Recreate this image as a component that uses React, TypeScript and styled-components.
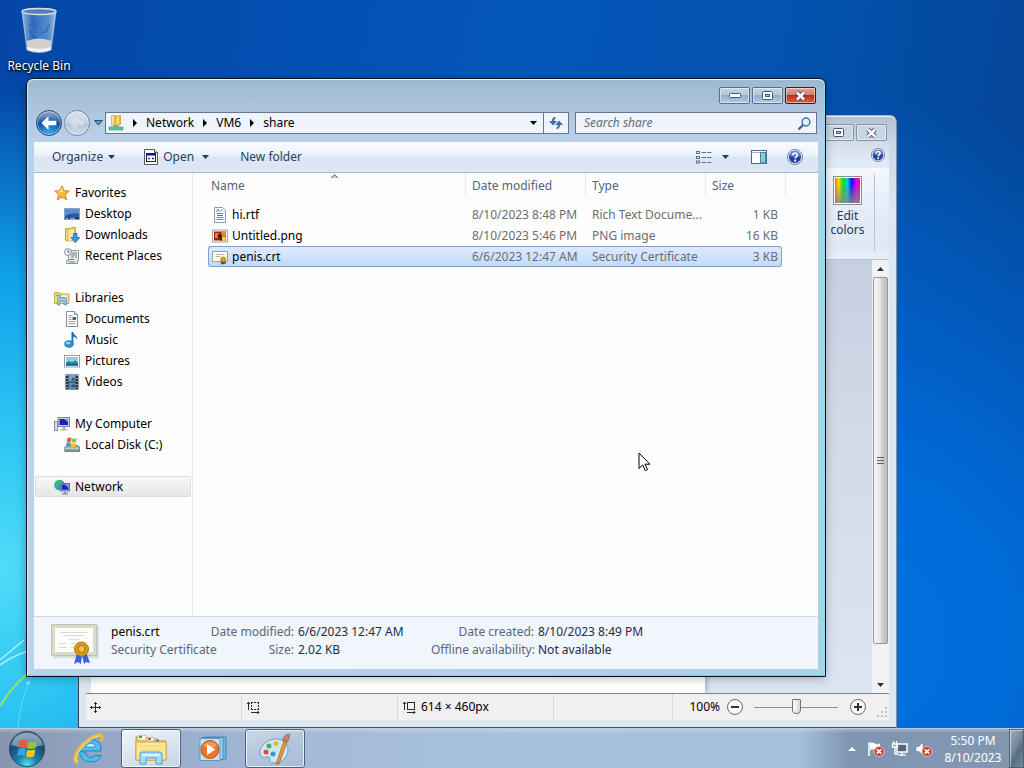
import React from "react";
import styled, { createGlobalStyle, css } from "styled-components";

const GlobalStyle = createGlobalStyle`
  * { box-sizing: border-box; }
  body {
    margin: 0;
    font-family: "Noto Sans", "Open Sans", sans-serif;
    font-size: 12px;
    line-height: 18px;
    color: #000;
    cursor: default;
  }
  button, input { font: inherit; color: inherit; }
  button { padding: 0; border: 0; background: none; }
  a { color: inherit; text-decoration: none; }
  svg { display: block; flex: none; }
`;

/* ---------- desktop ---------- */

const Screen = styled.div`
  display: flex;
  flex-direction: column;
  min-height: 100vh;
`;

const Desktop = styled.main`
  position: relative;
  flex: 1;
  min-height: 640px;
  overflow: hidden;
  background:
    radial-gradient(ellipse 38% 66% at 0% 78%, #4fdcf8 0%, #2cc4f2 30%, #0f9ee8 62%, rgba(10, 125, 220, 0) 100%),
    radial-gradient(ellipse 55% 75% at 82% 88%, #0074e0 0%, #0069d6 35%, rgba(0, 96, 200, 0) 100%),
    linear-gradient(100deg, #0446a8 0%, #0356b8 45%, #0353b0 68%, #044190 100%);
`;

const Waves = styled.svg`
  position: absolute;
  left: 0;
  bottom: 0;
`;

const DesktopIcon = styled.button`
  display: flex;
  flex-direction: column;
  align-items: center;
  gap: 4px;
  width: 78px;
  padding-top: 7px;
  color: #fff;
  text-shadow: 0 1px 2px #000, 1px 1px 3px #000;
`;

const Pointer = styled.svg`
  position: absolute;
  left: 638px;
  top: 452px;
`;

/* ---------- window frame ---------- */

const Frame = styled.section<{ $active?: boolean }>`
  position: absolute;
  display: flex;
  flex-direction: column;
  padding: 8px 7px 7px;
  border: 1px solid ${(p) => (p.$active ? "#06121f" : "#4d6472")};
  border-radius: 7px 7px 0 0;
  ${(p) =>
    p.$active
      ? css`
          left: 26px;
          right: 198px;
          top: 78px;
          bottom: 51px;
          background:
            linear-gradient(180deg, #9db8cc 0, #adc5dc 30px, #bbd1ea 62px, rgba(187, 209, 234, 0) 120px),
            linear-gradient(90deg, #bcd2ea 0, #b4d0e8 60%, #a6d3e6 100%);
          box-shadow: inset 0 1px 0 #eef6fc, inset 1px 0 0 #d8ecf8, inset -1px 0 0 #8fdcf2, inset 0 -1px 0 #62d8f4,
            0 2px 10px rgba(0, 0, 0, 0.25);
        `
      : css`
          left: 78px;
          right: 127px;
          top: 115px;
          bottom: 0;
          border-color: #9fb2c6 #7d93ab #43565f #2e4552;
          background: linear-gradient(180deg, #b3c2d3 0, #c9d6e5 26px, #dde7f1 90px, #dde6ee 100%);
          box-shadow: inset 0 1px 0 #eef3f8;
        `}
`;

const Caption = styled.div`
  display: flex;
  justify-content: flex-end;
  gap: 2px;
  padding-right: 2px;
`;

const CaptionButton = styled.button<{ $kind?: "close" | "idle" }>`
  display: grid;
  place-items: center;
  width: 31px;
  height: 17px;
  border: 1px solid #56708c;
  border-radius: 2px;
  box-shadow: inset 0 0 0 1px rgba(255, 255, 255, 0.5);
  background: linear-gradient(180deg, #c3d4e4 0, #b2c7db 48%, #94aec8 50%, #b4cbe2 100%);
  ${(p) =>
    p.$kind === "close" &&
    css`
      border-color: #4c1418;
      background: linear-gradient(180deg, #e3a497 0, #d47867 48%, #bb2f1c 50%, #d4654c 100%);
    `}
  ${(p) =>
    p.$kind === "idle" &&
    css`
      border-color: #8293a9;
      background: #c8d5e3;
    `}
`;

/* ---------- explorer: navigation ---------- */

const NavRow = styled.div`
  display: flex;
  align-items: center;
  height: 26px;
  margin: 6px 1px 6px 2px;
`;

const RoundButton = styled.button<{ $primary?: boolean }>`
  display: grid;
  place-items: center;
  width: 26px;
  height: 26px;
  margin-right: 2px;
  border: 1px solid ${(p) => (p.$primary ? "#25456f" : "#75899f")};
  border-radius: 50%;
  background: ${(p) =>
    p.$primary
      ? "radial-gradient(circle at 50% 100%, #35b8ee 0, #1867b4 45%, rgba(20, 60, 130, 0) 70%), linear-gradient(180deg, #93aed2 0, #3c63a4 45%, #0d2f78 50%, #15458f 100%)"
      : "linear-gradient(180deg, #d9e3ee 0, #c6d5e5 48%, #b4c5d9 52%, #cddbe9 100%)"};
  box-shadow: inset 0 0 0 1px rgba(255, 255, 255, 0.5);
`;

const HistoryButton = styled.button`
  display: grid;
  place-items: center;
  width: 13px;
  height: 22px;
`;

const AddressBar = styled.div`
  display: flex;
  flex: 1;
  align-items: stretch;
  height: 22px;
  border: 1px solid #63788f;
  background: #eef3fc;
`;

const Crumbs = styled.nav`
  display: flex;
  flex: 1;
  align-items: center;
  gap: 9px;
  padding-left: 2px;
`;

const CrumbStep = styled.span`
  display: flex;
  align-items: center;
  gap: 9px;
`;

const BarButton = styled.button<{ $divided?: boolean }>`
  display: grid;
  place-items: center;
  width: ${(p) => (p.$divided ? "25px" : "20px")};
  border-left: ${(p) => (p.$divided ? "1px solid #63788f" : "0")};
`;

const SearchBox = styled.label`
  display: flex;
  align-items: center;
  width: 242px;
  height: 22px;
  margin-left: 6px;
  padding: 0 5px 0 8px;
  border: 1px solid #63788f;
  background: #eef3fc;
`;

const SearchInput = styled.input`
  flex: 1;
  min-width: 0;
  padding: 0;
  border: 0;
  outline: 0;
  background: none;
  &::placeholder {
    color: #666c75;
    font-style: italic;
    opacity: 1;
  }
`;

/* ---------- explorer: client area ---------- */

const Client = styled.div`
  display: flex;
  flex: 1;
  flex-direction: column;
  min-height: 0;
  background: #fdfdfe;
`;

const Toolbar = styled.div`
  display: flex;
  align-items: center;
  height: 31px;
  padding: 0 15px 0 18px;
  border-bottom: 1px solid #a4b4c9;
  background: linear-gradient(180deg, #fafcff 0, #eaf2fb 45%, #dce5f3 52%, #dde6f4 100%);
  color: #2b3f5a;
`;

const ToolButton = styled.button<{ $gap?: number }>`
  display: flex;
  align-items: center;
  gap: 5px;
  margin-right: ${(p) => p.$gap ?? 0}px;
`;

const Spacer = styled.span`
  flex: 1;
`;

const Body = styled.div`
  display: flex;
  flex: 1;
  min-height: 0;
`;

const Sidebar = styled.nav`
  width: 159px;
  padding: 9px 1px 0;
  border-right: 1px solid #e6ebf4;
`;

const NavGroup = styled.ul`
  margin: 0 0 21px;
  padding: 0;
  list-style: none;
`;

const NavLink = styled.a<{ $child?: boolean; $current?: boolean }>`
  display: flex;
  align-items: center;
  gap: 5px;
  height: 21px;
  padding-left: ${(p) => (p.$child ? 28 : 18)}px;
  border: 1px solid ${(p) => (p.$current ? "#dedede" : "transparent")};
  border-radius: 2px;
  background: ${(p) => (p.$current ? "linear-gradient(180deg, #f8f8f8, #e6e6e6)" : "none")};
`;

const Files = styled.div`
  flex: 1;
  min-width: 0;
  padding-left: 15px;
`;

const FileTable = styled.table`
  width: 578px;
  table-layout: fixed;
  border-collapse: separate;
  border-spacing: 0;
  tbody::before {
    content: "";
    display: block;
    height: 7px;
  }
`;

const HeadCell = styled.th`
  position: relative;
  height: 24px;
  padding: 2px 0 0 6px;
  border-right: 1px solid #e4e9f1;
  color: #55657a;
  font-weight: 400;
  text-align: left;
  &:first-child {
    padding-left: 3px;
  }
`;

const SortMark = styled.svg`
  position: absolute;
  top: 1px;
  left: 48%;
`;

const Row = styled.tr<{ $selected?: boolean }>`
  td {
    height: 21px;
    padding: 0 0 0 6px;
    overflow: hidden;
    border: 0 solid #7da2ce;
    color: #6d6d6d;
    text-overflow: ellipsis;
    white-space: nowrap;
  }
  td:first-child {
    padding-left: 4px;
    color: #000;
  }
  td:last-child {
    padding-right: 4px;
    text-align: right;
  }
  ${(p) =>
    p.$selected &&
    css`
      td {
        border-width: 1px 0;
        background: linear-gradient(180deg, #dcebfc, #c1dbfc);
      }
      td:first-child {
        padding-left: 3px;
        border-left-width: 1px;
        border-radius: 3px 0 0 3px;
      }
      td:last-child {
        padding-right: 3px;
        border-right-width: 1px;
        border-radius: 0 3px 3px 0;
      }
    `}
`;

const FileName = styled.span`
  display: flex;
  align-items: center;
  gap: 4px;
`;

const Details = styled.footer`
  display: flex;
  height: 53px;
  padding: 6px 0 0 17px;
  border-top: 1px solid #cdd9e8;
  background: #f1f5fc;
`;

const DetailName = styled.div`
  width: 99px;
  margin-left: 12px;
  color: #5a6779;
  white-space: nowrap;
`;

const DetailTitle = styled.div`
  color: #000;
`;

const DetailList = styled.dl<{ $labels: number; $values: number }>`
  display: grid;
  grid-template-columns: ${(p) => p.$labels}px ${(p) => p.$values}px;
  grid-auto-rows: 18px;
  column-gap: 4px;
  margin: 0;
  white-space: nowrap;
  dt {
    color: #5a6779;
    text-align: right;
  }
  dd {
    margin: 0;
    color: #1e2d45;
  }
`;

/* ---------- paint window ---------- */

const TabRow = styled.div`
  display: flex;
  align-items: center;
  justify-content: flex-end;
  height: 27px;
  padding-right: 4px;
  background: linear-gradient(180deg, rgba(226, 235, 247, 0.3), #e3ebf7);
`;

const Ribbon = styled.div`
  display: flex;
  justify-content: flex-end;
  height: 92px;
  padding: 5px 14px 8px 0;
  border-top: 1px solid #f6f9fd;
  border-bottom: 1px solid #b3c3d8;
  background: linear-gradient(180deg, #f4f8fd 0, #e3ebf7 50%, #dfe9f6 85%, #e6f1fb 100%);
`;

const RibbonButton = styled.button`
  display: flex;
  flex-direction: column;
  align-items: center;
  width: 54px;
  padding-top: 2px;
  border-right: 1px solid #b5c4d8;
  color: #1e395b;
  line-height: 14px;
`;

const RibbonLabel = styled.span`
  width: 40px;
  margin-top: 4px;
`;

const Workspace = styled.div`
  display: flex;
  flex: 1;
  min-height: 0;
  padding-left: 5px;
  background: linear-gradient(180deg, #c5cfe1 0, #d0d9e7 35%, #dce6f2 100%);
`;

const Paper = styled.div`
  width: 614px;
  background: #fff;
  box-shadow: 3px 0 4px #b4c0d2;
`;

const ScrollBar = styled.div`
  display: flex;
  flex-direction: column;
  width: 17px;
  margin-left: auto;
  padding: 0 1px;
  background: #f1f2f4;
`;

const ScrollArrow = styled.button`
  display: grid;
  place-items: center;
  height: 17px;
`;

const ScrollThumb = styled.div`
  display: grid;
  place-items: center;
  flex: 367;
  border: 1px solid #959799;
  border-radius: 2px;
  background: linear-gradient(90deg, #f7f7f7 0, #e9e9ea 45%, #cfd0d3 60%, #bcbdc0 100%);
`;

const ScrollRest = styled.div`
  flex: 32;
`;

const StatusBar = styled.footer`
  display: flex;
  height: 27px;
  border-top: 1px solid #7d828c;
  background: #f1eff0;
`;

const StatusCell = styled.div<{ $wide?: boolean }>`
  display: flex;
  align-items: center;
  gap: 4px;
  width: ${(p) => (p.$wide ? 156 : 119)}px;
  padding-left: 4px;
  border-right: 1px solid #d9d9dc;
`;

const ZoomArea = styled.div`
  display: flex;
  flex: 1;
  align-items: center;
  justify-content: flex-end;
  gap: 7px;
`;

const ZoomButton = styled.button`
  display: grid;
  place-items: center;
  width: 16px;
  height: 16px;
  border: 1px solid #6a6a6a;
  border-radius: 50%;
  background: #fafafa;
`;

const ZoomSlider = styled.input`
  width: 84px;
  height: 16px;
  margin: 0 5px 0 4px;
  appearance: none;
  background: none;
  &::-webkit-slider-runnable-track {
    height: 1px;
    background: #8f9194;
  }
  &::-webkit-slider-thumb {
    appearance: none;
    width: 9px;
    height: 15px;
    margin-top: -8px;
    border: 1px solid #6f7174;
    border-radius: 1px 1px 4px 4px;
    background: linear-gradient(90deg, #fff, #d4d6d9);
  }
`;

/* ---------- taskbar ---------- */

const Taskbar = styled.footer`
  display: flex;
  height: 40px;
  border-top: 1px solid #bccbd8;
  background:
    linear-gradient(180deg, rgba(255, 255, 255, 0.28) 0, rgba(255, 255, 255, 0) 4px),
    linear-gradient(90deg, #8795b0 0, #94a6c4 10%, #a3b9d8 28%, #a8c2de 50%, #a5bfdd 78%, #7f96b3 83%, #8197b0 100%);
`;

const StartButton = styled.button`
  display: grid;
  place-items: center;
  width: 54px;
  margin-right: 5px;
`;

const TaskButton = styled.button<{ $state?: "open" | "active" }>`
  display: grid;
  place-items: center;
  width: 60px;
  margin-right: 2px;
  border: 1px solid transparent;
  border-radius: 3px;
  ${(p) =>
    p.$state &&
    css`
      border-color: #4d6279;
      box-shadow: inset 0 0 0 1px rgba(255, 255, 255, 0.7);
      background: ${p.$state === "active"
        ? "linear-gradient(160deg, #f1f5f9 0, #dbe5ef 50%, #c5d5e6 100%)"
        : "linear-gradient(160deg, #cdd9e8 0, #b3c5dc 50%, #a5bcd8 100%)"};
    `}
`;

const Tray = styled.div`
  display: flex;
  align-items: center;
  gap: 6px;
  margin-left: auto;
`;

const TrayButton = styled.button`
  display: grid;
  place-items: center;
  width: 18px;
  height: 24px;
`;

const Clock = styled.time`
  width: 64px;
  padding-left: 4px;
  color: #fff;
  line-height: 17px;
  text-align: center;
`;

const PeekButton = styled.button`
  align-self: stretch;
  width: 15px;
  border: 1px solid #4f6273;
  box-shadow: inset 1px 1px 0 rgba(255, 255, 255, 0.5);
  background: linear-gradient(120deg, #9aaab9 0, #75899d 45%, #566d82 60%, #74899e 100%);
`;

/* ---------- small drawings ---------- */

const Caret = ({ color = "#1e395b" }: { color?: string }) => (
  <svg width="7" height="4" viewBox="0 0 7 4"><path d="M0 0h7L3.500 4z" fill={color} /></svg>
);

const RightArrow = () => (
  <svg width="4" height="8" viewBox="0 0 4 8"><path d="M0 0l4 4-4 4z" /></svg>
);

const MinGlyph = () => (
  <svg width="12" height="5" viewBox="0 0 12 5"><rect x=".5" y=".5" width="11" height="4" rx="1" fill="#fff" stroke="#47586c" /></svg>
);

const MaxGlyph = () => (
  <svg width="11" height="9" viewBox="0 0 11 9">
    <rect x=".5" y=".5" width="10" height="8" rx="1" fill="#fff" stroke="#47586c" />
    <rect x="3.500" y="3.500" width="4" height="2" fill="#b5c8da" stroke="#47586c" />
  </svg>
);

const CloseGlyph = () => (
  <svg width="13" height="10" viewBox="0 0 13 10">
    <path d="M3 1.500l7 7M10 1.500l-7 7" stroke="#47465c" strokeWidth="4.500" />
    <path d="M3 1.500l7 7M10 1.500l-7 7" stroke="#fff" strokeWidth="2.600" />
  </svg>
);

const HelpIcon = ({ size }: { size: number }) => (
  <svg width={size} height={size} viewBox="0 0 16 16">
    <circle cx="8" cy="8" r="7.500" fill="#dfe7f2" stroke="#7482a0" />
    <circle cx="8" cy="8" r="6" fill="#2440a4" />
    <path d="M2.400 7A5.700 5.700 0 0 1 13.600 7Q8 9 2.400 7z" fill="#7c96dc" opacity=".7" />
    <path d="M5.700 6.300c.1-3 4.700-2.900 4.700-.2 0 1.700-2.200 1.700-2.200 3.500" fill="none" stroke="#fff" strokeWidth="1.700" />
    <circle cx="8.200" cy="11.700" r="1.100" fill="#fff" />
  </svg>
);

const Flag = ({ x, y, s }: { x: number; y: number; s: number }) => (
  <g transform={`translate(${x} ${y}) scale(${s})`}>
    <path d="M2 1.500Q5 0 8 1.500L7 7Q4 5.500 1 7z" fill="#ef5a24" />
    <path d="M9 1.800Q12 3.300 15.500 1.800L14.500 7.200Q11 8.700 8 7.300z" fill="#8cc63c" />
    <path d="M.8 8Q4 6.500 6.800 8L5.800 13.500Q3 12-.2 13.500z" fill="#3aa0e8" />
    <path d="M7.800 8.300Q11 9.700 14.300 8.200L13.300 13.800Q10 15.300 6.800 13.800z" fill="#fdc51c" />
  </g>
);

const icons: Record<string, React.ReactNode> = {
  star: (
    <>
      <path d="M8 .8l2.100 4.800 5.200.5-3.900 3.500 1.200 5.200L8 12.100l-4.600 2.700 1.200-5.200L.7 6.100l5.200-.5z" fill="#fbb83a" stroke="#d9822b" />
      <path d="M8 2.800l1.300 3.600L5 7.500 2.800 6.700l3.700-.4z" fill="#ffe9a0" />
    </>
  ),
  desktop: (
    <>
      <rect x=".5" y="2.500" width="15" height="11" fill="#2958a8" stroke="#8fa2bc" />
      <path d="M1 3h14v5Q8 6 1 10z" fill="#5b8bd2" />
      <path d="M1 11.500h14V13H1z" fill="#1d2b45" />
      <path d="M2 12.300h2m2 0h5" stroke="#a9c7e8" />
    </>
  ),
  downloads: (
    <>
      <path d="M1.500 1.500h5l1-1h4v13h-10z" fill="#f0d67c" stroke="#c7a545" />
      <path d="M4 2v12.500l6.500-1.200V2z" fill="#fbe9a0" stroke="#d0b050" strokeWidth=".7" />
      <path d="M9.500 6.500h3.500v4h2.700L11.300 15.700 7 10.500h2.500z" fill="#3a9be0" stroke="#1c66a6" strokeWidth=".8" />
    </>
  ),
  recent: (
    <>
      <path d="M4.500 2.500h10v10h-1v3h-11v-3h2z" fill="#e6eaec" stroke="#8e999f" />
      <path d="M8 5h5M7 7h6M7 9h3m1 0h2M5 11.500h5M5 14h6" stroke="#6f7f8a" />
      <circle cx="4" cy="4" r="3.400" fill="#f7f9fa" stroke="#7f8a90" />
      <path d="M4 2v2.200h1.600" fill="none" stroke="#57636b" />
    </>
  ),
  libraries: (
    <>
      <path d="M.5 2.500h5l1 1.500h8.500v9.500H.5z" fill="#f6de84" stroke="#cbab4a" />
      <path d="M2 4.500h5v2H2z" fill="#7cc06a" /><path d="M8 5.500h5v1.500H8z" fill="#fff" />
      <path d="M3.500 15V9.500q0-2 2-2h5q2 0 2 2V15h-2.500v-4h-4v4z" fill="#8fcbec" stroke="#4b94c4" strokeWidth=".8" />
    </>
  ),
  documents: (
    <>
      <path d="M2.500.5h8l3 3v12h-11z" fill="#fff" stroke="#8b8f94" />
      <path d="M10.500.5v3h3" fill="#dfe3e8" stroke="#8b8f94" />
      <path d="M4.500 4.500h4M4.500 6.500h3M4.500 8.500h3M4.500 10.500h7M4.500 12.500h7" stroke="#9aa3ad" />
      <rect x="8.500" y="6" width="3.500" height="3" fill="#4a5f75" />
    </>
  ),
  music: (
    <>
      <path d="M7.500 0h1.700c.3 3 4.600 3.600 3.800 8-.5-2.200-2-3-3.700-3.200V12H7.500z" fill="#1c6cae" />
      <ellipse cx="5" cy="12" rx="4.300" ry="3.300" fill="#2c92d6" stroke="#1a6caa" strokeWidth=".7" />
      <ellipse cx="4.200" cy="11" rx="2.200" ry="1.200" fill="#9cd8f6" />
    </>
  ),
  pictures: (
    <>
      <rect x=".5" y="2.500" width="15" height="11.500" fill="#fff" stroke="#8aa1b5" />
      <rect x="2" y="4" width="12" height="8.500" fill="#8fd0ee" />
      <path d="M2 9.500l3-1.500 3 1.500 3-2 3 2v3H2z" fill="#2b7f9a" />
      <path d="M2 11h12v1.500H2z" fill="#1b5b7a" />
    </>
  ),
  videos: (
    <>
      <rect x="1.500" y=".5" width="13" height="15" fill="#23303f" />
      <path d="M3 1v14.500M13 1v14.500" stroke="#e8eef4" strokeWidth="1.200" strokeDasharray="1 2" />
      <rect x="4.500" y="1" width="7" height="6.500" fill="#6aa9e4" /><rect x="4.500" y="8.500" width="7" height="6.500" fill="#4f8fd4" />
      <path d="M7 6l2-3 2 1.500-1.500 2.500zM7 13l2-3 2 1.500-1.500 2z" fill="#713f37" />
    </>
  ),
  computer: (
    <>
      <rect x=".5" y="5.500" width="3" height="9" fill="#dcdfe6" stroke="#848a9a" />
      <rect x="4" y="1.500" width="11.500" height="9" fill="#c8cddc" stroke="#7e86a0" />
      <rect x="5.500" y="3" width="8.500" height="6" fill="#1c23b4" /><path d="M10 3h4v3z" fill="#8f9cf0" />
      <path d="M8.500 11h3v2h2v1.500h-7V13h2z" fill="#b2b7c6" />
    </>
  ),
  disk: (
    <>
      <path d="M2 10l2-2h8l3.500 2v4.500H.8V10z" fill="#8d9a9f" stroke="#5c696e" strokeWidth=".8" />
      <path d="M1 10.500h14V12H1z" fill="#c0ccd0" /><rect x="11" y="12.500" width="3" height="1" fill="#51d645" />
      <Flag x={2} y={0} s={0.700} />
    </>
  ),
  network: (
    <>
      <circle cx="5.500" cy="6" r="5.300" fill="#2d9bb8" /><path d="M2 3q3-3 6-1L6 5 3 8 1 7zM5 8l3 1-1 2z" fill="#3fbf5b" />
      <rect x="6.500" y="4.500" width="9" height="7.500" fill="#bac3df" stroke="#6b76a0" />
      <rect x="7.500" y="5.500" width="7" height="5.300" fill="#1d25b8" /><path d="M11 5.500h3.500V9z" fill="#8f9df2" />
      <path d="M10 12.500h2V14h2v1.500H8V14h2z" fill="#8d95b5" />
    </>
  ),
  netFolder: (
    <>
      <path d="M3.500.5h4v10h-4z" fill="#f0cf62" stroke="#d2a83e" strokeWidth=".7" />
      <path d="M7 1.500l5.500-1v9L7 11z" fill="#eec14c" stroke="#c8952c" strokeWidth=".7" />
      <path d="M5 1v8M9.500 2v7" stroke="#fdf3b8" />
      <path d="M7 10.500h2.500V12H7z" fill="#7fa79a" />
      <path d="M1 12h4l1-1h4l1 1h4v3H1z" fill="#5cc291" stroke="#4a9d7c" strokeWidth=".6" />
    </>
  ),
  rtf: (
    <>
      <path d="M2.500.5h8l3 3v12h-11z" fill="#fcfdff" stroke="#8f9aa6" />
      <path d="M4.500 5l1.500-3 1.500 3M8.500 3.500h2M4.500 6.500h7M4.500 10.500h7M4.500 12.500h7" fill="none" stroke="#7b8a9b" /><path d="M5 8.500h6" stroke="#3f78b4" />
    </>
  ),
  png: (
    <>
      <rect x=".5" y="2" width="15" height="12" fill="#fff" stroke="#a3a3a3" /><rect x="2" y="3.500" width="12" height="9" fill="#a31d12" />
      <path d="M3 5h4l-1 5H3zM9 4h5v4h-4z" fill="#e58a1e" /><circle cx="7.500" cy="8" r="2" fill="#5a130a" />
      <circle cx="11.800" cy="10.500" r="2.200" fill="#f8cf3e" /><path d="M8 9h2v3.500H8z" fill="#2f2b23" />
    </>
  ),
  crt: (
    <>
      <rect x=".5" y="2.500" width="15" height="10" fill="#fffef8" stroke="#a99f83" />
      <path d="M3.500 5.500h9M3.500 7.500h5" stroke="#b7b5ae" /><path d="M9.500 11.500l-1 4 1.800-.8 1.200 1 1-1.200 1.500.5-1-4z" fill="#4a4a5c" />
      <circle cx="11.200" cy="10.500" r="2.500" fill="#dc9c1e" stroke="#a86c12" strokeWidth=".7" />
    </>
  ),
};

const Icon = ({ name }: { name: string }) => (
  <svg width="16" height="16" viewBox="0 0 16 16">{icons[name]}</svg>
);

const BackArrow = ({ color }: { color: string }) => (
  <svg width="16" height="14" viewBox="0 0 16 14"><path d="M7.500 0L.5 7l7 7V9.300h7.800V4.700H7.500z" fill={color} /></svg>
);

/* ---------- data ---------- */

const crumbs = ["Network", "VM6", "share"];

const navGroups = [
  [["star", "Favorites"], ["desktop", "Desktop"], ["downloads", "Downloads"], ["recent", "Recent Places"]],
  [["libraries", "Libraries"], ["documents", "Documents"], ["music", "Music"], ["pictures", "Pictures"], ["videos", "Videos"]],
  [["computer", "My Computer"], ["disk", "Local Disk (C:)"]],
  [["network", "Network"]],
];

const files = [
  { icon: "rtf", name: "hi.rtf", date: "8/10/2023 8:48 PM", type: "Rich Text Docume...", size: "1 KB" },
  { icon: "png", name: "Untitled.png", date: "8/10/2023 5:46 PM", type: "PNG image", size: "16 KB" },
  { icon: "crt", name: "penis.crt", date: "6/6/2023 12:47 AM", type: "Security Certificate", size: "3 KB" },
];

/* ---------- windows ---------- */

const PaintWindow = () => (
  <Frame aria-label="Paint">
    <Caption>
      <CaptionButton $kind="idle" aria-label="Maximize"><MaxGlyph /></CaptionButton>
      <CaptionButton $kind="idle" aria-label="Close"><CloseGlyph /></CaptionButton>
    </Caption>
    <TabRow><button aria-label="Help"><HelpIcon size={14} /></button></TabRow>
    <Ribbon>
      <RibbonButton>
        <svg width="29" height="29" viewBox="0 0 29 29">
          <defs>
            <linearGradient id="hues">
              <stop offset="0" stopColor="#f60" /><stop offset=".14" stopColor="#fd0" /><stop offset=".32" stopColor="#1d2" />
              <stop offset=".5" stopColor="#0cd" /><stop offset=".66" stopColor="#11f" /><stop offset=".85" stopColor="#d0e" /><stop offset="1" stopColor="#f08" />
            </linearGradient>
            <linearGradient id="fade" x2="0" y2="1">
              <stop offset=".2" stopColor="#888" stopOpacity="0" /><stop offset="1" stopColor="#888" stopOpacity=".85" />
            </linearGradient>
          </defs>
          <rect x=".5" y=".5" width="28" height="28" fill="#fff" stroke="#8a8d92" />
          <path d="M2 2h25v25H2z" fill="url(#hues)" /><path d="M2 2h25v25H2z" fill="url(#fade)" />
        </svg>
        <RibbonLabel>Edit colors</RibbonLabel>
      </RibbonButton>
    </Ribbon>
    <Workspace>
      <Paper />
      <ScrollBar>
        <ScrollArrow aria-label="Scroll up"><svg width="7" height="4" viewBox="0 0 7 4"><path d="M0 4h7L3.500 0z" fill="#333" /></svg></ScrollArrow>
        <ScrollThumb>
          <svg width="7" height="8" viewBox="0 0 7 8"><path d="M0 .5h7M0 3.500h7M0 6.500h7" stroke="#5c5e62" /></svg>
        </ScrollThumb>
        <ScrollRest />
        <ScrollArrow aria-label="Scroll down"><Caret color="#333" /></ScrollArrow>
      </ScrollBar>
    </Workspace>
    <StatusBar>
      <StatusCell $wide>
        <svg width="11" height="11" viewBox="0 0 11 11" fill="none" stroke="#222c38">
          <path d="M5.500 0v11M0 5.500h11M4 2l1.500-1.500L7 2M4 9l1.500 1.500L7 9M2 4L.5 5.500 2 7M9 4l1.500 1.500L9 7" />
        </svg>
      </StatusCell>
      <StatusCell $wide>
        <svg width="15" height="13" viewBox="0 0 15 13" fill="none" stroke="#222c38">
          <path d="M2.500 9V1M1 3l1.500-2L4 3M5 11.500h8M11.500 10l1.500 1.500-1.500 1.500" />
          <path d="M5 1.500h9M5 8.500h9M5.500 1v8M12.500 1v8" strokeDasharray="2 1" />
        </svg>
      </StatusCell>
      <StatusCell $wide>
        <svg width="15" height="13" viewBox="0 0 15 13" fill="none" stroke="#222c38">
          <path d="M2.500 9V1M1 3l1.500-2L4 3M5 11.500h8M11.500 10l1.500 1.500-1.500 1.500" /><rect x="5.500" y="1.500" width="7" height="7" />
        </svg>
        614 × 460px
      </StatusCell>
      <StatusCell />
      <ZoomArea>
        <span>100%</span>
        <ZoomButton aria-label="Zoom out"><svg width="8" height="8" viewBox="0 0 8 8"><path d="M0 4h8" stroke="#333" strokeWidth="2" /></svg></ZoomButton>
        <ZoomSlider type="range" min="0" max="100" defaultValue="50" aria-label="Zoom" />
        <ZoomButton aria-label="Zoom in"><svg width="8" height="8" viewBox="0 0 8 8"><path d="M0 4h8M4 0v8" stroke="#333" strokeWidth="2" /></svg></ZoomButton>
        <svg width="16" height="24" viewBox="0 0 16 24" fill="#c2c5ca">
          <path d="M12 12h2v2h-2zM8 16h2v2H8zM12 16h2v2h-2zM4 20h2v2H4zM8 20h2v2H8zM12 20h2v2h-2z" />
        </svg>
      </ZoomArea>
    </StatusBar>
  </Frame>
);

const ExplorerWindow = () => (
  <Frame $active aria-label="share">
    <Caption>
      <CaptionButton aria-label="Minimize"><MinGlyph /></CaptionButton>
      <CaptionButton aria-label="Maximize"><MaxGlyph /></CaptionButton>
      <CaptionButton $kind="close" aria-label="Close"><CloseGlyph /></CaptionButton>
    </Caption>
    <NavRow>
      <RoundButton $primary aria-label="Back"><BackArrow color="#fff" /></RoundButton>
      <RoundButton aria-label="Forward"><BackArrow color="rgba(225, 234, 243, 0.6)" /></RoundButton>
      <HistoryButton aria-label="Recent pages">
        <svg width="9" height="6" viewBox="0 0 9 6"><path d="M.6.5h7.800L4.500 5z" fill="#4ba3dc" stroke="#2c4d70" /></svg>
      </HistoryButton>
      <AddressBar>
        <Crumbs aria-label="Address">
          <Icon name="netFolder" />
          {crumbs.map((crumb) => (
            <CrumbStep key={crumb}>
              <RightArrow />
              <a href={`#${crumb}`}>{crumb}</a>
            </CrumbStep>
          ))}
        </Crumbs>
        <BarButton aria-label="Previous locations"><Caret color="#000" /></BarButton>
        <BarButton $divided aria-label="Refresh">
          <svg width="14" height="14" viewBox="0 0 14 14" fill="#3a70aa">
            <path d="M6.500 1Q3 1 3 5H0l4 4.500L8 5H5.200Q5.200 3 6.500 2.500z" />
            <path d="M7.500 13q3.500 0 3.500-4h3L10 4.500 6 9h2.800q0 2-1.300 2.500z" />
          </svg>
        </BarButton>
      </AddressBar>
      <SearchBox>
        <SearchInput type="text" placeholder="Search share" aria-label="Search share" />
        <svg width="13" height="13" viewBox="0 0 13 13" fill="none">
          <path d="M5.500 7.500L1.200 11.800" stroke="#45597c" strokeWidth="2.200" strokeLinecap="round" />
          <circle cx="8" cy="5" r="3.900" fill="#e6f0fb" stroke="#4173ab" strokeWidth="1.500" />
        </svg>
      </SearchBox>
    </NavRow>
    <Client>
      <Toolbar>
        <ToolButton $gap={29}>Organize <Caret /></ToolButton>
        <ToolButton $gap={8}>
          <svg width="14" height="16" viewBox="0 0 14 16">
            <path d="M.5.5h10l3 3v12H.5z" fill="#fff" stroke="#5a5a5a" /><path d="M10.500.5v3h3" fill="#ddd" stroke="#5a5a5a" />
            <rect x="2.500" y="4.500" width="9" height="8" fill="#fff" stroke="#14147c" /><path d="M3 5.500h8" stroke="#14147c" strokeWidth="2" />
            <path d="M4 9.500h2M5 8.500v2M8 9.500h2M9 8.500v2" stroke="#333" />
          </svg>
          Open
        </ToolButton>
        <ToolButton $gap={31} aria-label="Open with"><Caret /></ToolButton>
        <ToolButton>New folder</ToolButton>
        <Spacer />
        <ToolButton $gap={10} aria-label="Change your view">
          <svg width="16" height="13" viewBox="0 0 16 13" fill="none" stroke="#5f7489">
            <rect x=".5" y=".5" width="3" height="2" /><rect x=".5" y="5.500" width="3" height="2" /><rect x=".5" y="10" width="3" height="2" />
            <path d="M5.500 1.500H10M11 1.500h4.500M5.500 6.500H10M11 6.500h4.500M5.500 11.500H10M11 11.500h4.500" />
          </svg>
        </ToolButton>
        <ToolButton $gap={22} aria-label="More options"><Caret /></ToolButton>
        <ToolButton $gap={20} aria-label="Show the preview pane">
          <svg width="16" height="14" viewBox="0 0 16 14">
            <rect x=".5" y=".5" width="15" height="13" fill="#fff" stroke="#4c6a86" /><path d="M1 2.500h14" stroke="#9fb7cc" />
            <rect x="9.500" y="2.500" width="5" height="10.500" fill="#8accd2" stroke="#44869a" />
          </svg>
        </ToolButton>
        <ToolButton aria-label="Help"><HelpIcon size={16} /></ToolButton>
      </Toolbar>
      <Body>
        <Sidebar aria-label="Folders">
          {navGroups.map((group, g) => (
            <NavGroup key={g}>
              {group.map(([icon, label], i) => (
                <li key={label}>
                  <NavLink href={`#${icon}`} $child={i > 0} $current={label === "Network"}>
                    <Icon name={icon} />
                    {label}
                  </NavLink>
                </li>
              ))}
            </NavGroup>
          ))}
        </Sidebar>
        <Files>
          <FileTable>
            <colgroup>
              <col width="258" /><col width="120" /><col width="120" /><col width="76" /><col width="4" />
            </colgroup>
            <thead>
              <tr>
                <HeadCell>
                  Name
                  <SortMark width="7" height="4" viewBox="0 0 7 4"><path d="M0 4l3.500-3.500L7 4" fill="#b8cfe2" stroke="#5c7285" /></SortMark>
                </HeadCell>
                <HeadCell>Date modified</HeadCell>
                <HeadCell>Type</HeadCell>
                <HeadCell colSpan={2}>Size</HeadCell>
              </tr>
            </thead>
            <tbody>
              {files.map((f) => (
                <Row key={f.name} $selected={f.icon === "crt"}>
                  <td><FileName><Icon name={f.icon} />{f.name}</FileName></td>
                  <td>{f.date}</td>
                  <td>{f.type}</td>
                  <td>{f.size}</td>
                </Row>
              ))}
            </tbody>
          </FileTable>
        </Files>
      </Body>
      <Details>
        <svg width="48" height="42" viewBox="0 0 48 42">
          <rect x="2" y="3" width="46" height="32" fill="#c9cbcc" opacity=".6" />
          <rect x=".5" y="1.500" width="45" height="31" fill="#dcdacb" stroke="#c2c0b2" /><rect x="4" y="5" width="38" height="24" fill="#fdfdfb" />
          <path d="M9 9.500h28M13 12.500h20M18 16.500h10M8 20.500h7M20 20.500h6M8 24.500h8M20 24.500h5" stroke="#dcd8cf" />
          <path d="M26 30l-3 11 4-2 3 2 1-9zM31 32l2 9 2-2 4 1-4-11z" fill="#3c63dc" />
          <circle cx="30.500" cy="26" r="7" fill="#d99a18" stroke="#b97a10" /><circle cx="30.500" cy="26" r="3.500" fill="#f2c548" stroke="#a8700e" />
        </svg>
        <DetailName>
          <DetailTitle>penis.crt</DetailTitle>
          Security Certificate
        </DetailName>
        <DetailList $labels={84} $values={133}>
          <dt>Date modified:</dt><dd>6/6/2023 12:47 AM</dd>
          <dt>Size:</dt><dd>2.02 KB</dd>
        </DetailList>
        <DetailList $labels={103} $values={133}>
          <dt>Date created:</dt><dd>8/10/2023 8:49 PM</dd>
          <dt>Offline availability:</dt><dd>Not available</dd>
        </DetailList>
      </Details>
    </Client>
  </Frame>
);

const RedCross = () => (
  <>
    <circle cx="12" cy="11.500" r="5" fill="#d4372f" stroke="#f5d0cc" strokeWidth=".8" />
    <path d="M9.800 9.300l4.400 4.400M14.200 9.300l-4.400 4.400" stroke="#fff" strokeWidth="1.700" />
  </>
);

export default function App() {
  return (
    <Screen>
      <GlobalStyle />
      <Desktop>
        <Waves width="100" height="140" viewBox="0 0 100 140" fill="none">
          <path d="M0 118Q20 85 52 70" stroke="#8fe070" strokeWidth="2" />
          <path d="M0 77Q14 66 40 60M0 72Q12 62 24 52" stroke="#d6f8ff" strokeWidth="1.500" opacity=".75" />
          <path d="M18 140Q20 112 30 92" stroke="#8be4fb" opacity=".6" />
          <circle cx="28" cy="95" r="2" fill="#bdf2ff" opacity=".5" />
        </Waves>
        <DesktopIcon>
          <svg width="38" height="46" viewBox="0 0 38 46">
            <defs>
              <linearGradient id="glass"><stop offset="0" stopColor="#c3d8ec" stopOpacity=".8" /><stop offset=".3" stopColor="#4f86c8" stopOpacity=".6" /><stop offset=".8" stopColor="#80afdf" stopOpacity=".7" /><stop offset="1" stopColor="#d6e4f2" stopOpacity=".8" /></linearGradient>
            </defs>
            <path d="M2 4h34l-5 39q-12 5-24 0z" fill="url(#glass)" stroke="#b9cfe4" strokeWidth=".8" />
            <path d="M6.500 34q12.500-5 25 0l-1.300 9q-11.200 4-22.400 0z" fill="#d5d0cb" />
            <path d="M7 40q12 4 24 0l-.5 3q-11.500 4-23 0z" fill="#f2f3f5" />
            <ellipse cx="19" cy="4.500" rx="17" ry="3" fill="#5480b2" stroke="#d5e1ec" strokeWidth="1.400" />
            <path d="M9 20l4-5 4 4M10 23l3 7h4M29 17l-3 8-5 1" fill="none" stroke="#2767b8" strokeWidth="2" opacity=".7" />
          </svg>
          Recycle Bin
        </DesktopIcon>
        <PaintWindow />
        <ExplorerWindow />
        <Pointer width="13" height="20" viewBox="0 0 13 20">
          <path d="M1 1v15.500l3.700-3.500 2.500 5.600 2.300-1-2.500-5.400H12z" fill="#fff" stroke="#000" />
        </Pointer>
      </Desktop>
      <Taskbar>
        <StartButton aria-label="Start">
          <svg width="36" height="36" viewBox="0 0 36 36">
            <defs>
              <radialGradient id="orb" cx=".5" cy=".95" r=".85"><stop offset="0" stopColor="#4fe4f2" /><stop offset=".35" stopColor="#1782a8" /><stop offset=".75" stopColor="#1c4a74" /><stop offset="1" stopColor="#56789a" /></radialGradient>
            </defs>
            <circle cx="18" cy="18" r="17.500" fill="url(#orb)" stroke="#28475f" />
            <path d="M2.500 14A16 16 0 0 1 33.500 14Q18 20 2.500 14z" fill="#c3d5e6" opacity=".5" />
            <Flag x={8.500} y={8} s={1.250} />
          </svg>
        </StartButton>
        <TaskButton aria-label="Internet Explorer">
          <svg width="34" height="34" viewBox="0 0 34 34" fill="none">
            <path d="M7.500 19h21.500Q30 8 19 7.500 8.500 8 7.500 19 8 30 19 30q7.500 0 10-6.500h-6.500q-1.300 2-3.800 2-4.500-.5-4.700-4.500z" fill="#4fbdec" stroke="#2585bb" />
            <path d="M13.500 15q1-3.500 5-3.600 4.500 0 4.700 3.600z" fill="#dcecf6" stroke="#2585bb" strokeWidth=".8" />
            <path d="M9 13q3-4 9-4.500" stroke="#b4e8fb" strokeWidth="1.500" />
            <path d="M6 31Q-1 28 8 16 18 4 27 3q5 0 2.500 6" stroke="#f1bd2c" strokeWidth="3" /><path d="M6 30Q1 27 9 16.500 19 5 27 4" stroke="#fce68c" />
          </svg>
        </TaskButton>
        <TaskButton $state="active" aria-label="File Explorer">
          <svg width="34" height="32" viewBox="0 0 34 32">
            <path d="M2 4h11l2 2h9l1 2h7v19H2z" fill="#eccb62" stroke="#bf973b" /><path d="M4 2.500h8V7H4zM13 4.500h7V8h-7z" fill="#fff" stroke="#c9ac60" strokeWidth=".7" />
            <path d="M5 3h3v2H5z" fill="#4fa348" /><path d="M14 5h3v2h-3z" fill="#d64b35" /><path d="M22 7h3v2h-3z" fill="#3c86cc" />
            <path d="M2 9h30v18H2z" fill="#fae99a" stroke="#d0ad4c" /><path d="M4 13h26M4 17h26" stroke="#f2d978" />
            <path d="M6 31V21q0-2 2-2h18q2 0 2 2v10h-6v-6H12v6z" fill="#a7dcf4" stroke="#4b9ed0" />
            <path d="M8 22h18" stroke="#e9f9ff" strokeWidth="1.500" />
          </svg>
        </TaskButton>
        <TaskButton aria-label="Media Player">
          <svg width="28" height="28" viewBox="0 0 28 28">
            <path d="M5 2h22v22H5z" fill="#6fb7e2" stroke="#4286b5" /><path d="M3 2.500h21v22H3z" fill="#a0d4f0" stroke="#4a90bd" />
            <path d="M1 3.500h20v22H1z" fill="#c3e2f3" stroke="#5a9ac2" />
            <circle cx="11" cy="14.500" r="9" fill="#ee752b" stroke="#c4511a" /><path d="M4 11a8 8 0 0 1 14 0q-7 4-14 0z" fill="#f8ae72" opacity=".6" />
            <path d="M8 9l8.500 5.500L8 20z" fill="#fff" />
          </svg>
        </TaskButton>
        <TaskButton $state="open" aria-label="Paint">
          <svg width="34" height="34" viewBox="0 0 34 34">
            <path d="M17 7C6 8-1 18 3 24c3 4 6-1 8 1s-1 5 4 6c8 1 15-6 15-13 0-7-6-12-13-11z" fill="#cfe6f4" stroke="#6a9fc4" />
            <circle cx="8" cy="20" r="2.500" fill="#dc4b3e" /><circle cx="11" cy="14" r="2.500" fill="#4dac51" /><circle cx="18" cy="11.500" r="2.500" fill="#f0bc2a" /><circle cx="15" cy="22" r="2.500" fill="#3f8ede" />
            <path d="M18 32L26 9l3 1-8 22z" fill="#e3983a" stroke="#a86722" strokeWidth=".8" /><path d="M25 9q0-7 7-7-1 6-3 8z" fill="#bd866a" stroke="#92614a" strokeWidth=".7" />
          </svg>
        </TaskButton>
        <Tray>
          <TrayButton aria-label="Show hidden icons"><svg width="8" height="4" viewBox="0 0 8 4"><path d="M0 4h8L4 0z" fill="#fff" /></svg></TrayButton>
          <TrayButton aria-label="Action Center">
            <svg width="18" height="18" viewBox="0 0 18 18"><path d="M2 2v14" stroke="#fff" strokeWidth="1.500" /><path d="M3 3q3-1 5 .5t5 0v7q-3 1-5-.5T3 10z" fill="#fff" /><RedCross /></svg>
          </TrayButton>
          <TrayButton aria-label="Network status">
            <svg width="18" height="18" viewBox="0 0 18 18" fill="none" stroke="#fff"><rect x="6" y="4" width="10" height="8" fill="#52687d" strokeWidth="1.500" /><path d="M11 12v2.500M7.500 15h7M2.500 1v3M5.500 1v3M1.500 4h5v3h-5zM4 7v7h3" strokeWidth="1.300" /></svg>
          </TrayButton>
          <TrayButton aria-label="Volume muted">
            <svg width="18" height="18" viewBox="0 0 18 18"><path d="M1 6.500h3L8 2v13L4 11.500H1z" fill="#fff" stroke="#5c6c7c" strokeWidth=".5" /><RedCross /></svg>
          </TrayButton>
          <Clock>5:50 PM<br />8/10/2023</Clock>
          <PeekButton aria-label="Show desktop" />
        </Tray>
      </Taskbar>
    </Screen>
  );
}
